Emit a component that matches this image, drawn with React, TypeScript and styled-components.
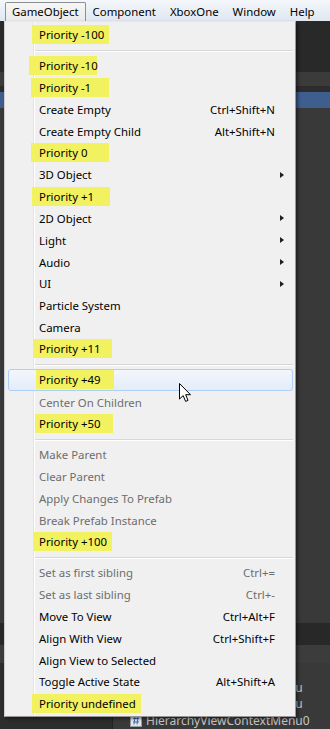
import React from 'react'
import styled, { createGlobalStyle } from 'styled-components'

const GlobalStyle = createGlobalStyle`
  html, body {
    margin: 0;
    padding: 0;
  }
  body {
    width: 330px;
    height: 729px;
    overflow: hidden;
    background: #383838;
    font-family: "Noto Sans", "Liberation Sans", sans-serif;
  }
`

const Screen = styled.div`
  position: relative;
  width: 330px;
  height: 729px;
  overflow: hidden;
  display: flex;
  flex-direction: column;
`

const MenuBar = styled.div`
  height: 21px;
  box-sizing: border-box;
  padding: 2px 0 0 5px;
  display: flex;
  align-items: stretch;
  background: linear-gradient(#f4f7fb, #dfe7f1);
`

const MenuTitle = styled.div<{ $open?: boolean }>`
  padding: 0 6px;
  border: 1px solid ${(p) => (p.$open ? '#8e8f8f' : 'transparent')};
  border-bottom: none;
  border-radius: 2px 2px 0 0;
  background: ${(p) => (p.$open ? 'linear-gradient(#f7f7f7, #e9e9e9)' : 'transparent')};
  font-size: 11.4px;
  line-height: 18px;
  color: #000;
  white-space: nowrap;
`

const Band = styled.div<{ $h: number; $bg: string }>`
  height: ${(p) => p.$h}px;
  flex: none;
  background: ${(p) => p.$bg};
`

const BottomPanel = styled.div`
  flex: 1;
  display: flex;
`

const PanelSide = styled.div`
  width: 112px;
  background: #2d2d2d;
  border-right: 1px solid #232323;
`

const ProjectList = styled.div`
  flex: 1;
  padding: 16px 0 0 17px;
  background: #393939;
`

const ProjectRow = styled.div`
  height: 16.5px;
  display: flex;
  align-items: center;
  gap: 4px;
  font-size: 12px;
  color: #c6c6c6;
  white-space: nowrap;
`

const Dropdown = styled.div`
  position: absolute;
  top: 21px;
  left: 4px;
  width: 292px;
  box-sizing: border-box;
  padding: 2px 0 1px;
  border: 1px solid #979797;
  border-left-color: #cfcfcf;
  border-top: 1px solid #e8e8e8;
  background:
    linear-gradient(
      to right,
      transparent 28px,
      #e2e3e3 28px,
      #e2e3e3 29px,
      #ffffff 29px,
      #ffffff 30px,
      transparent 30px
    ),
    #f0f0f0;
  box-shadow: 2px 2px 3px rgba(0, 0, 0, 0.45);
  font-size: 11.4px;
`

const Row = styled.div<{ $hover?: boolean; $disabled?: boolean }>`
  height: 21.8px;
  box-sizing: border-box;
  margin: 0 2px 0 3px;
  padding: 0 8px 0 30px;
  display: flex;
  align-items: center;
  border: 1px solid ${(p) => (p.$hover ? '#aecff7' : 'transparent')};
  border-radius: 3px;
  background: ${(p) => (p.$hover ? 'linear-gradient(#f3f7fc, #e4ecf8)' : 'transparent')};
  color: ${(p) => (p.$disabled ? '#6d6d6d' : '#000')};
  white-space: nowrap;
`

const Label = styled.span<{ $markLeft?: number; $markWidth?: number }>`
  display: flex;
  align-items: center;
  ${(p) =>
    p.$markWidth
      ? `
    align-self: stretch;
    margin: 0 0 1px ${-(p.$markLeft ?? 0)}px;
    padding-left: ${p.$markLeft}px;
    width: ${p.$markWidth}px;
    box-sizing: border-box;
    background: #f2f15f;
  `
      : ''}
`

const Shortcut = styled.span`
  margin-left: auto;
  margin-right: 9px;
`

const Arrow = styled.span`
  margin-left: auto;
  width: 0;
  height: 0;
  border-left: 4px solid #1e1e1e;
  border-top: 3.5px solid transparent;
  border-bottom: 3.5px solid transparent;
`

const Separator = styled.div`
  height: 9.2px;
  margin: 0 2px 0 30px;
  display: flex;
  align-items: center;
`

const SepLine = styled.div`
  flex: 1;
  height: 1px;
  background: #d7d7d7;
  box-shadow: 0 1px 0 #ffffff;
`

const Cursor = styled.svg`
  position: absolute;
  left: 179px;
  top: 383px;
`

type Item =
  | 'sep'
  | {
      label: string
      shortcut?: string
      sub?: boolean
      disabled?: boolean
      mark?: [number, number]
      hover?: boolean
    }

const items: Item[] = [
  { label: 'Priority -100', mark: [7, 77] },
  'sep',
  { label: 'Priority -10', mark: [10, 68] },
  { label: 'Priority -1', mark: [8, 78] },
  { label: 'Create Empty', shortcut: 'Ctrl+Shift+N' },
  { label: 'Create Empty Child', shortcut: 'Alt+Shift+N' },
  { label: 'Priority 0', mark: [8, 78] },
  { label: '3D Object', sub: true },
  { label: 'Priority +1', mark: [7, 78] },
  { label: '2D Object', sub: true },
  { label: 'Light', sub: true },
  { label: 'Audio', sub: true },
  { label: 'UI', sub: true },
  { label: 'Particle System' },
  { label: 'Camera' },
  { label: 'Priority +11', mark: [5, 78] },
  'sep',
  { label: 'Priority +49', mark: [3, 78], hover: true },
  { label: 'Center On Children', disabled: true },
  { label: 'Priority +50', mark: [4, 78] },
  'sep',
  { label: 'Make Parent', disabled: true },
  { label: 'Clear Parent', disabled: true },
  { label: 'Apply Changes To Prefab', disabled: true },
  { label: 'Break Prefab Instance', disabled: true },
  { label: 'Priority +100', mark: [5, 78] },
  'sep',
  { label: 'Set as first sibling', shortcut: 'Ctrl+=', disabled: true },
  { label: 'Set as last sibling', shortcut: 'Ctrl+-', disabled: true },
  { label: 'Move To View', shortcut: 'Ctrl+Alt+F' },
  { label: 'Align With View', shortcut: 'Ctrl+Shift+F' },
  { label: 'Align View to Selected' },
  { label: 'Toggle Active State', shortcut: 'Alt+Shift+A' },
  { label: 'Priority undefined', mark: [7, 109] },
]

const ScriptIcon = () => (
  <svg width="12" height="13" viewBox="0 0 12 13">
    <rect x="0.5" y="0.5" width="11" height="12" fill="#e6e6e6" stroke="#9a9a9a" />
    <path d="M3 4.5h6M3 8h6M5 2.5l-1 8M8 2.5l-1 8" stroke="#3b6fb6" strokeWidth="1" fill="none" />
  </svg>
)

export default function App() {
  return (
    <Screen>
      <GlobalStyle />
      <MenuBar>
        <MenuTitle $open>GameObject</MenuTitle>
        <MenuTitle>Component</MenuTitle>
        <MenuTitle>XboxOne</MenuTitle>
        <MenuTitle>Window</MenuTitle>
        <MenuTitle>Help</MenuTitle>
      </MenuBar>

      <Band $h={51} $bg="#292929" />
      <Band $h={14} $bg="#3b3b3b" />
      <Band $h={6} $bg="#2c2c2c" />
      <Band $h={16} $bg="#3e5e8e" />
      <Band $h={515} $bg="#393939" />
      <Band $h={22} $bg="#282828" />
      <Band $h={18} $bg="#3c3c3c" />
      <BottomPanel>
        <PanelSide />
        <ProjectList>
          <ProjectRow>
            <ScriptIcon />
            HierarchyViewContextMenu
          </ProjectRow>
          <ProjectRow>
            <ScriptIcon />
            HierarchyViewContextMenu
          </ProjectRow>
          <ProjectRow>
            <ScriptIcon />
            HierarchyViewContextMenu0
          </ProjectRow>
        </ProjectList>
      </BottomPanel>

      <Dropdown>
        {items.map((it, i) =>
          it === 'sep' ? (
            <Separator key={i}>
              <SepLine />
            </Separator>
          ) : (
            <Row key={i} $hover={it.hover} $disabled={it.disabled}>
              <Label $markLeft={it.mark?.[0]} $markWidth={it.mark?.[1]}>
                {it.label}
              </Label>
              {it.shortcut && <Shortcut>{it.shortcut}</Shortcut>}
              {it.sub && <Arrow />}
            </Row>
          )
        )}
      </Dropdown>

      <Cursor width="13" height="20" viewBox="0 0 13 20">
        <path
          d="M0.5 0.5 L0.5 16 L4.2 12.6 L6.6 18.4 L9 17.4 L6.7 11.7 L11.5 11.7 Z"
          fill="#ffffff"
          stroke="#000000"
          strokeWidth="1"
          strokeLinejoin="miter"
        />
      </Cursor>
    </Screen>
  )
}
